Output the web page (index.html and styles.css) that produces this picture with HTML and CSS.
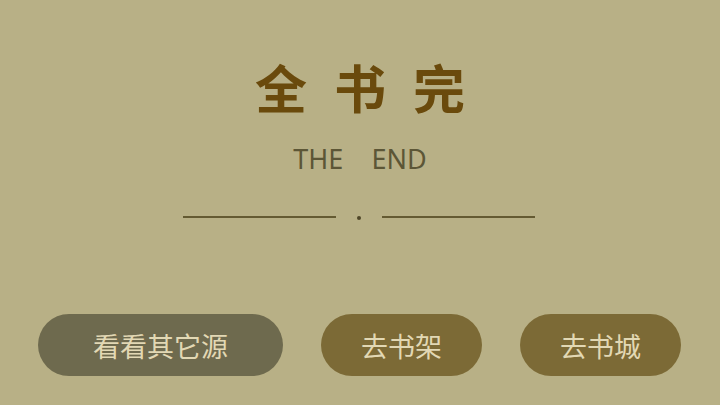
FILE: index.html
```html
<!DOCTYPE html>
<html lang="zh">
<head>
<meta charset="utf-8">
<link rel="stylesheet" href="styles.css">
</head>
<body>
<main class="page">
  <h1 class="title">全书完</h1>
  <p class="subtitle">THE&nbsp;&nbsp;&nbsp;&nbsp;END</p>
  <div class="divider">
    <span class="line"></span>
    <span class="dot"></span>
    <span class="line"></span>
  </div>
  <div class="actions">
    <button class="btn btn-source">看看其它源</button>
    <button class="btn btn-shelf">去书架</button>
    <button class="btn btn-shelf">去书城</button>
  </div>
</main>
</body>
</html>
```
FILE: styles.css
```css
html, body {
  margin: 0;
  padding: 0;
  width: 720px;
  height: 405px;
  overflow: hidden;
  background: #b8b086;
  font-family: "Noto Sans CJK SC", "Noto Sans", sans-serif;
}
.page {
  display: flex;
  flex-direction: column;
  align-items: center;
  height: 405px;
}
.title {
  margin: 55px 0 0;
  font-size: 52px;
  line-height: 64px;
  font-weight: 700;
  color: #6a4a0c;
  letter-spacing: 27px;
  text-indent: 27px;
}
.subtitle {
  margin: 25px 0 0;
  font-family: "Noto Sans", sans-serif;
  font-size: 27px;
  line-height: 30px;
  color: #5c5636;
}
.divider {
  margin-top: 39px;
  margin-right: 2px;
  display: flex;
  align-items: center;
  gap: 21px;
}
.line {
  display: block;
  width: 153px;
  height: 2px;
  background: #645a32;
}
.dot {
  display: block;
  width: 4px;
  height: 4px;
  border-radius: 50%;
  background: #4e4628;
  margin-top: 3px;
}
.actions {
  margin-top: 94px;
  width: 100%;
  box-sizing: border-box;
  padding: 0 39px 0 38px;
  display: flex;
  gap: 38px;
}
.btn {
  border: none;
  height: 62px;
  border-radius: 31px;
  font-family: "Noto Sans CJK SC", sans-serif;
  font-size: 27px;
  color: #e2d8b4;
  padding: 0;
}
.btn-source {
  width: 245px;
  background: #6e6a4e;
}
.btn-shelf {
  width: 161px;
  background: #7c6a36;
}
```
